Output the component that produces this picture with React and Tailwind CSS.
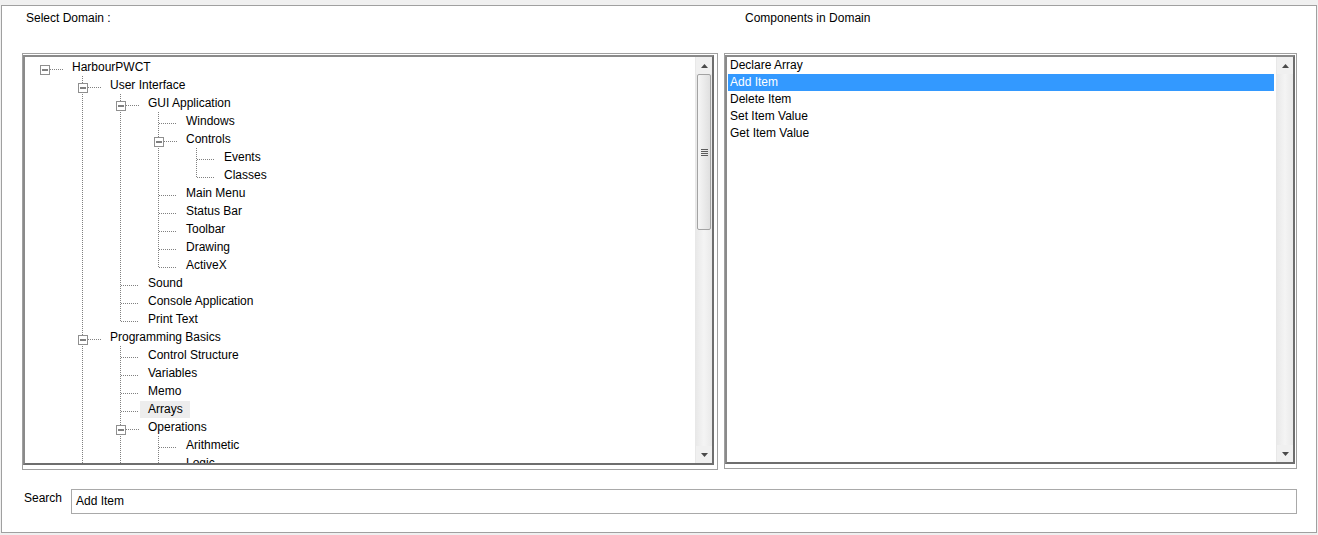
import React from "react";

const tree = {
  label: "HarbourPWCT",
  children: [
    {
      label: "User Interface",
      children: [
        {
          label: "GUI Application",
          children: [
            { label: "Windows" },
            { label: "Controls", children: [{ label: "Events" }, { label: "Classes" }] },
            { label: "Main Menu" },
            { label: "Status Bar" },
            { label: "Toolbar" },
            { label: "Drawing" },
            { label: "ActiveX" },
          ],
        },
        { label: "Sound" },
        { label: "Console Application" },
        { label: "Print Text" },
      ],
    },
    {
      label: "Programming Basics",
      cont: true,
      children: [
        { label: "Control Structure" },
        { label: "Variables" },
        { label: "Memo" },
        { label: "Arrays", hot: true },
        {
          label: "Operations",
          cont: true,
          children: [{ label: "Arithmetic" }, { label: "Logic", cont: true }],
        },
      ],
    },
  ],
};

// walk the tree into rows; lasts[c] says whether the ancestor at depth c is a last child
// (cont marks nodes whose siblings are scrolled out of view)
const flatten = (node, depth, lasts, out) => {
  out.push({ ...node, depth, lasts });
  (node.children || []).forEach((child, i, arr) => {
    flatten(child, depth + 1, [...lasts, i === arr.length - 1 && !child.cont], out);
  });
  return out;
};

const rows = flatten(tree, 0, [true], []);
const components = ["Declare Array", "Add Item", "Delete Item", "Set Item Value", "Get Item Value"];

const DOT = { stroke: "#808080", strokeWidth: 1, strokeDasharray: "1 1" };

const Guide = ({ on }) => (
  <svg width="38" height="18" className="shrink-0">
    {on && <line x1="19.5" y1="0" x2="19.5" y2="18" {...DOT} />}
  </svg>
);

const Connector = ({ row }) => {
  const hasKids = row.children && row.children.length > 0;
  const isLast = row.lasts[row.depth];
  return (
    <svg width="38" height="18" className="shrink-0">
      {row.depth > 0 && <line x1="19.5" y1="0" x2="19.5" y2={isLast ? 11 : 18} {...DOT} />}
      {hasKids ? (
        <>
          <line x1="25" y1="11.5" x2="38" y2="11.5" {...DOT} />
          <rect x="15.5" y="7.5" width="9" height="9" fill="#fff" stroke="#8f8f8f" />
          <line x1="17" y1="12" x2="23" y2="12" stroke="#000" />
        </>
      ) : (
        <line x1="20" y1="11.5" x2="38" y2="11.5" {...DOT} />
      )}
    </svg>
  );
};

const Arrow = ({ down }) => (
  <div className="h-[17px] flex items-center justify-center">
    <svg width="7" height="4" viewBox="0 0 7 4">
      <path d={down ? "M0 0H7L3.5 4Z" : "M0 4H7L3.5 0Z"} fill="#4a4a4a" />
    </svg>
  </div>
);

const ScrollBar = ({ thumb }) => (
  <div className="w-[17px] h-full flex flex-col bg-[#f0f0f0] border-l border-[#e8e8e8] shrink-0">
    <Arrow />
    <div className="flex-1 flex flex-col px-[1px] bg-gradient-to-r from-[#e9e9e9] via-[#f4f4f4] to-[#e9e9e9]">
      {thumb && (
        <div className="h-[156px] rounded-[2px] border border-[#a3a3a3] bg-gradient-to-r from-[#f6f6f6] to-[#e0e0e0] flex flex-col items-center justify-center gap-[1px]">
          {[0, 1, 2, 3].map((i) => (
            <div key={i} className="w-[7px] h-[1px] bg-[#5c5c5c]" />
          ))}
        </div>
      )}
    </div>
    <Arrow down />
  </div>
);

const Frame = ({ className, children }) => (
  <div className={`border border-[#a0a0a0] bg-white pt-[1px] pb-[4px] ${className}`}>
    <div className="h-full border-2 border-t-[#8a8a8a] border-l-[#8a8a8a] border-r-[#6e6e6e] border-b-[#6e6e6e] flex overflow-hidden">
      {children}
    </div>
  </div>
);

export default function App() {
  return (
    <div
      className="w-[1318px] h-[535px] bg-[#f0f0f0] pt-[5px] pl-[1px] pr-[1px] pb-[2px] text-[12px] text-black"
      style={{ fontFamily: '"Liberation Sans", Arial, sans-serif' }}
    >
      <div className="h-full bg-white border border-[#a0a0a0] flex flex-col pl-[20px]">
        <div className="flex mt-[5px] leading-[14px]">
          <div className="w-[702px] pl-[4px]">Select Domain :</div>
          <div className="pl-[21px]">Components in Domain</div>
        </div>

        <div className="flex gap-[6px] mt-[28px]">
          <Frame className="w-[696px] h-[417px] pr-[3px]">
            <div className="flex-1 pt-[1px] overflow-hidden">
              {rows.map((row, i) => (
                <div key={i} className="flex h-[18px] items-center whitespace-nowrap">
                  {row.depth > 0 && <Guide on={false} />}
                  {row.lasts.slice(1, row.depth).map((last, c) => (
                    <Guide key={c} on={!last} />
                  ))}
                  <Connector row={row} />
                  <span
                    className={`ml-[1px] pl-[8px] pr-[7px] leading-[17px] ${row.hot ? "bg-[#ededed]" : ""}`}
                  >
                    {row.label}
                  </span>
                </div>
              ))}
            </div>
            <ScrollBar thumb />
          </Frame>

          <Frame className="w-[573px] h-[416px] pr-[1px]">
            <div className="flex-1 pr-[2px]">
              {components.map((c) => (
                <div
                  key={c}
                  className={`h-[17px] leading-[17px] ml-[1px] pl-[2px] ${
                    c === "Add Item" ? "bg-[#3399ff] text-white" : ""
                  }`}
                >
                  {c}
                </div>
              ))}
            </div>
            <ScrollBar />
          </Frame>
        </div>

        <div className="flex items-start mt-[19px]">
          <div className="w-[49px] pl-[2px] pt-[2px] leading-[14px]">Search</div>
          <div className="w-[1226px] h-[25px] border border-[#a9a9a9] flex items-center pl-[4px] pb-[1px]">
            Add Item
          </div>
        </div>
      </div>
    </div>
  );
}
